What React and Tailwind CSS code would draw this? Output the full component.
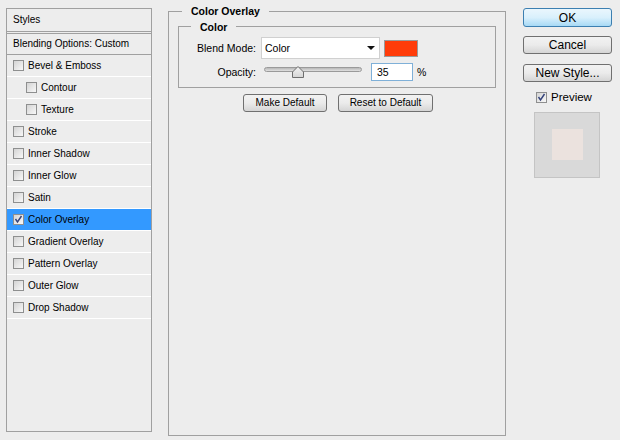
const items = [
  { label: "Bevel & Emboss" },
  { label: "Contour", nested: true },
  { label: "Texture", nested: true },
  { label: "Stroke" },
  { label: "Inner Shadow" },
  { label: "Inner Glow" },
  { label: "Satin" },
  { label: "Color Overlay", checked: true, active: true },
  { label: "Gradient Overlay" },
  { label: "Pattern Overlay" },
  { label: "Outer Glow" },
  { label: "Drop Shadow" },
];

function Check({ checked }) {
  return (
    <span className="relative grid h-[11px] w-[11px] shrink-0 place-items-center border border-[#8e8f8f] bg-gradient-to-br from-[#d4d4d4] to-[#f8f8f8]">
      {checked && (
        <svg width="9" height="9" viewBox="0 0 9 9" className="absolute">
          <path d="M1.5 4 L3.5 7 L7.5 1" fill="none" stroke="#33427a" strokeWidth="1.4" />
        </svg>
      )}
    </span>
  );
}

function Btn({ children, className = "" }) {
  return (
    <div className={`flex items-center justify-center rounded-[3px] border border-[#707070] bg-gradient-to-b from-[#f2f2f2] via-[#ebebeb] to-[#d5d5d5] text-black ${className}`}>
      {children}
    </div>
  );
}

export default function App() {
  return (
    <div className="flex h-[440px] w-[620px] bg-[#ededed] text-[10px] leading-none text-black" style={{ fontFamily: '"Liberation Sans", Arial, sans-serif' }}>
      {/* styles list */}
      <div className="ml-[6px] mt-[8px] flex h-[424px] w-[146px] flex-col border border-[#a0a0a0]">
        <div className="flex h-[25px] items-center border-b-[3px] border-double border-[#a0a0a0] px-[6px]">Styles</div>
        <div className="flex h-[21px] items-center border-b border-[#a0a0a0] px-[6px]">Blending Options: Custom</div>
        {items.map((it) => (
          <div
            key={it.label}
            className={`flex h-[22px] items-center gap-[4px] border-b border-white ${it.nested ? "pl-[19px]" : "pl-[6px]"} ${it.active ? "bg-[#3399ff]" : ""}`}
          >
            <Check checked={it.checked} />
            <span>{it.label}</span>
          </div>
        ))}
      </div>

      {/* settings */}
      <fieldset className="ml-[16px] mt-[6px] h-[430px] w-[338px] border border-[#a0a0a0] px-[9px] pt-0">
        <legend className="ml-[4px] px-[9px] text-[10.5px] font-bold">Color Overlay</legend>
        <fieldset className="mt-[5px] h-[66px] border border-[#a0a0a0]">
          <legend className="ml-[12px] px-[9px] text-[10.5px] font-bold">Color</legend>
          <div className="mt-[5px] flex items-center">
            <span className="w-[77px] text-right text-[10.5px]">Blend Mode:</span>
            <div className="relative ml-[5px] flex h-[22px] w-[119px] items-center border border-[#d0d0d0] bg-white pl-[3px] text-[10.5px]">
              Color
              <svg width="8" height="5" viewBox="0 0 8 5" className="absolute right-[4px] top-[8px]">
                <path d="M0 0 H8 L4 4 Z" fill="#111" />
              </svg>
            </div>
            <div className="ml-[4px] h-[17px] w-[34px] border border-[#9a9a9a] bg-[#ff3c0a]" />
          </div>
          <div className="mt-[4px] flex items-center">
            <span className="w-[77px] text-right text-[10.5px]">Opacity:</span>
            <div className="relative ml-[8px] h-[18px] w-[98px]">
              <div className="absolute left-0 right-0 top-[4px] h-[5px] rounded-full border border-[#9a9a9a] bg-gradient-to-b from-[#b8b8b8] to-[#e0e0e0]" />
              <svg width="12" height="12" viewBox="0 0 12 12" className="absolute left-[28px] top-[3px]">
                <defs>
                  <linearGradient id="th" x1="0" y1="0" x2="0" y2="1">
                    <stop offset="0" stopColor="#f4f4f4" />
                    <stop offset="1" stopColor="#d4d4d4" />
                  </linearGradient>
                </defs>
                <path d="M0.5 11.5 V6 L6 0.5 L11.5 6 V11.5 Z" fill="url(#th)" stroke="#6e6e6e" />
              </svg>
            </div>
            <div className="ml-[9px] flex h-[18px] w-[42px] items-center border border-[#7fb0d8] bg-white pl-[5px] text-[10.5px]">35</div>
            <span className="ml-[4px] text-[10.5px]">%</span>
          </div>
        </fieldset>
        <div className="mt-[6px] flex gap-[11px] pl-[65px]">
          <Btn className="h-[18px] w-[84px]">Make Default</Btn>
          <Btn className="h-[18px] w-[95px]">Reset to Default</Btn>
        </div>
      </fieldset>

      {/* buttons */}
      <div className="ml-[17px] mt-[8px] flex w-[89px] flex-col text-[12px]">
        <div className="flex h-[19px] items-center justify-center rounded-[3px] border border-[#3c7fb1] bg-gradient-to-b from-[#eaf6fd] via-[#d9f0fc] to-[#a7d9f5]">OK</div>
        <Btn className="mt-[9px] h-[18px]">Cancel</Btn>
        <Btn className="mt-[10px] h-[18px]">New Style...</Btn>
        <div className="mt-[10px] flex items-center gap-[4px] pl-[13px] text-[11.5px]">
          <Check checked />
          <span>Preview</span>
        </div>
        <div className="ml-[11px] mt-[8px] grid h-[66px] w-[66px] place-items-center border border-[#c4c4c4] bg-[#d9d9d9]">
          <div className="h-[31px] w-[31px] bg-[#ebe2de]" />
        </div>
      </div>
    </div>
  );
}
